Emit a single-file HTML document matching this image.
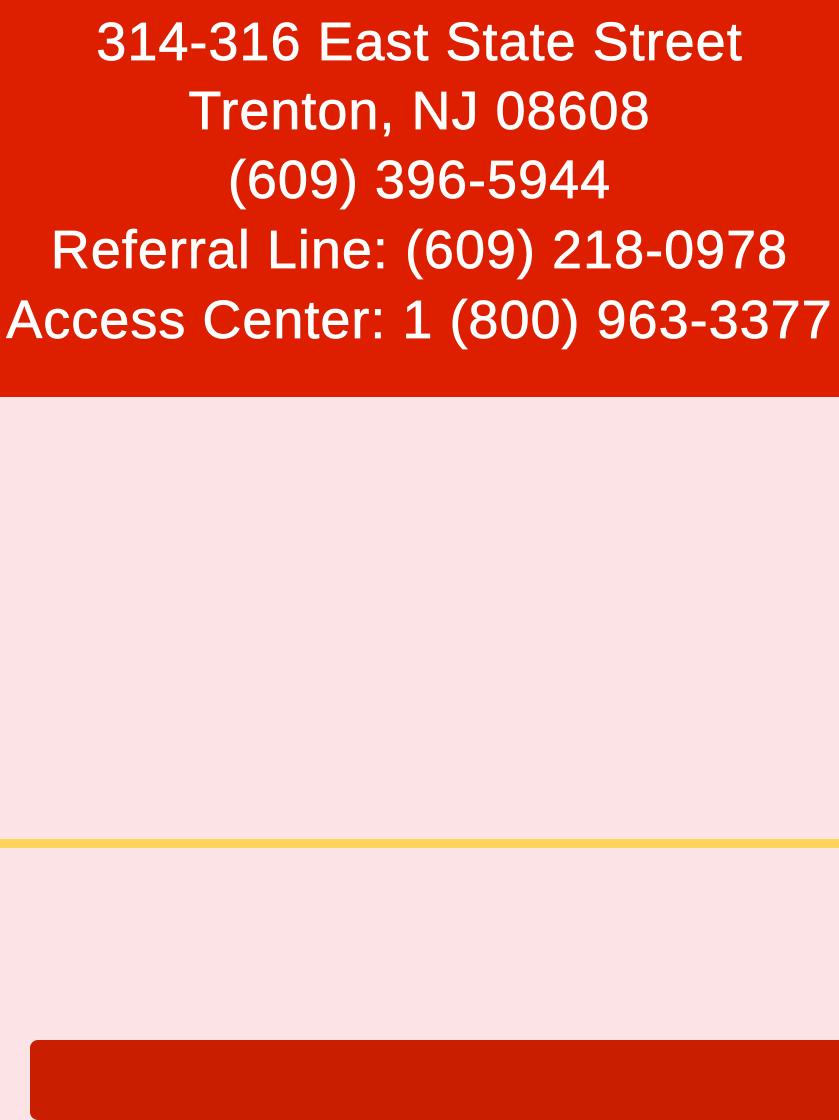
<!DOCTYPE html>
<html><head><meta charset="utf-8"><style>
html,body{margin:0;padding:0;}
body{width:839px;height:1097px;background:#fce4e6;position:relative;overflow:hidden;font-family:"Liberation Sans",sans-serif;}
.hdr{position:absolute;left:0;top:0;width:839px;height:397px;background:#dd1f00;color:#fff;}
.l{position:absolute;left:0;width:839px;text-align:center;font-size:54px;line-height:60px;white-space:nowrap;letter-spacing:1px;-webkit-text-stroke:0.7px #fff;}
.band{position:absolute;left:0;top:839px;width:839px;height:9px;background:#ffd45a;}
.btn{position:absolute;left:30px;top:1040px;width:820px;height:80px;background:#c91f00;border-radius:8px;}
</style></head><body>
<div class="hdr">
<div class="l" style="top:12px">314-316 East State Street</div>
<div class="l" style="top:81px">Trenton, NJ 08608</div>
<div class="l" style="top:150px">(609) 396-5944</div>
<div class="l" style="top:220px">Referral Line: (609) 218-0978</div>
<div class="l" style="top:290px">Access Center: 1 (800) 963-3377</div>
</div>
<div class="band"></div>
<div class="btn"></div>
</body></html>
